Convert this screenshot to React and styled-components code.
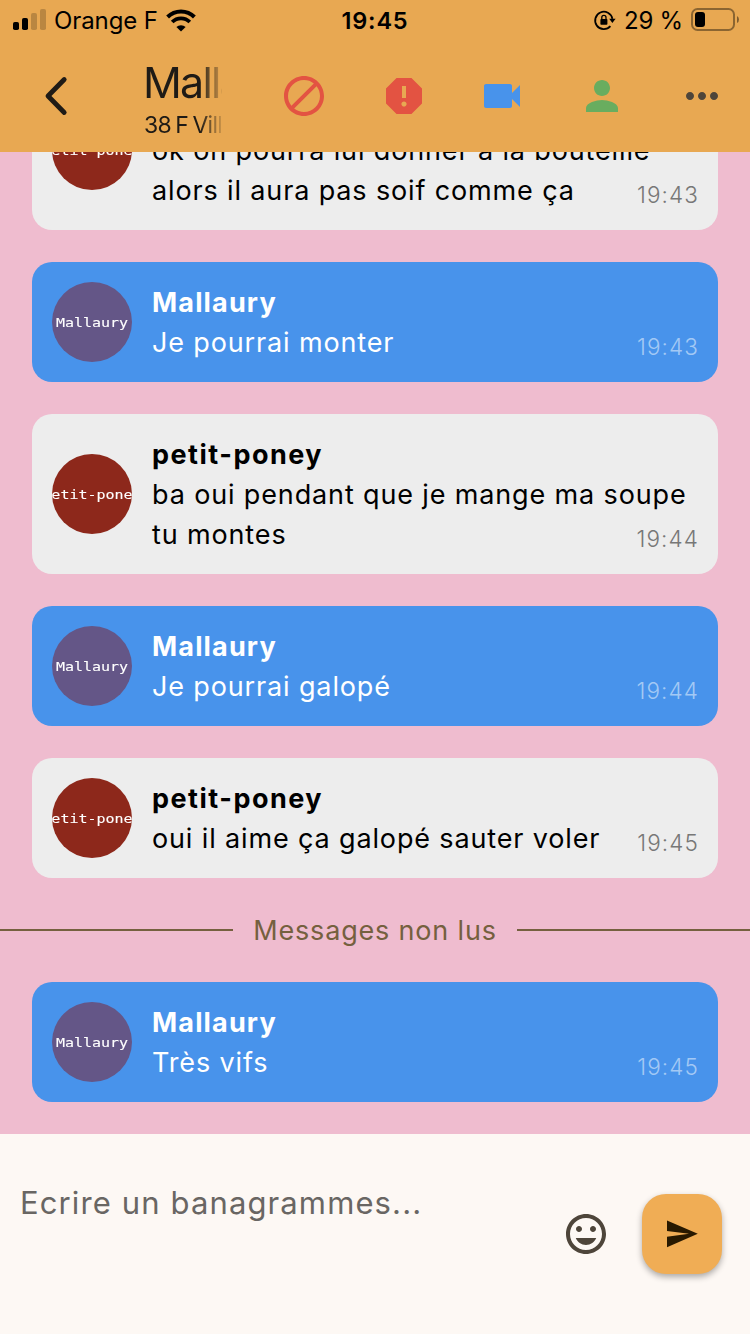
import React from "react";
import styled, { createGlobalStyle, css } from "styled-components";

const GlobalStyle = createGlobalStyle`
  * {
    box-sizing: border-box;
  }
  body {
    margin: 0;
    font-family: Inter, "Liberation Sans", sans-serif;
  }
`;

const changeTheme = (props) => {
  switch (props.$variant) {
    case "mine":
      return css`
        background: #4893eb;
        color: #ffffff;
      `;
    default:
      return css`
        background: #ededed;
        color: #000000;
      `;
  }
};

const Screen = styled.div`
  width: 750px;
  height: 1334px;
  display: flex;
  flex-direction: column;
  overflow: hidden;
  background: #efbccf;
`;
const Header = styled.header`
  height: 152px;
  flex: none;
  display: flex;
  flex-direction: column;
  background: #e8a852;
`;
const StatusBar = styled.div`
  height: 40px;
  display: grid;
  grid-template-columns: 1fr auto 1fr;
  align-items: center;
  padding: 0 11px 0 13px;
  color: #000000;
  font-size: 24px;
  line-height: 40px;
`;
const StatusLeft = styled.div`
  display: flex;
  align-items: center;
  gap: 8px;
`;
const StatusRight = styled(StatusLeft)`
  justify-content: flex-end;
`;
const Carrier = styled.span`
  padding-top: 2px;
  font-size: 24px;
  line-height: 38px;
  letter-spacing: -0.1px;
`;
const Clock = styled.span`
  padding: 2px 2px 0 0;
  font-size: 23.5px;
  line-height: 38px;
  font-weight: 600;
  letter-spacing: 0.8px;
`;
const Percent = styled.span`
  padding-top: 2px;
  font-size: 24px;
  line-height: 38px;
  letter-spacing: -0.2px;
`;
const Toolbar = styled.div`
  height: 112px;
  display: flex;
  align-items: center;
  padding: 0 24px 0 32px;
`;
const IconButton = styled.button`
  width: 48px;
  height: 48px;
  flex: none;
  padding: 0;
  border: none;
  background: none;
  color: ${(props) => props.$color || "#4e453a"};
  margin-left: ${(props) => props.$shift || "0"};
`;
const Contact = styled.div`
  width: 79px;
  height: 112px;
  margin-left: 63px;
  padding-top: 16px;
  overflow: hidden;
  white-space: nowrap;
  color: #1f1b16;
  mask-image: linear-gradient(to right, #000 72%, transparent 104%);
`;
const ContactName = styled.div`
  font-size: 43px;
  line-height: 52px;
  font-weight: 400;
  letter-spacing: -1.8px;
`;
const ContactInfo = styled.div`
  padding-left: 1px;
  font-size: 23px;
  line-height: 34px;
  font-weight: 400;
  letter-spacing: -0.7px;
  word-spacing: -1.5px;
`;
const Actions = styled.div`
  display: flex;
  gap: 52px;
  margin-left: auto;
`;
const Messages = styled.main`
  flex: 1;
  min-height: 0;
  display: flex;
  flex-direction: column;
  justify-content: flex-end;
  gap: 32px;
  padding-bottom: 32px;
  overflow: hidden;
`;
const Bubble = styled.article`
  position: relative;
  flex: none;
  display: flex;
  align-items: center;
  gap: 20px;
  margin: 0 32px;
  padding: 20px;
  border-radius: 20px;
  ${changeTheme}
`;
const Avatar = styled.div`
  width: 80px;
  height: 80px;
  flex: none;
  display: flex;
  align-items: center;
  justify-content: center;
  overflow: hidden;
  border-radius: 50%;
  white-space: nowrap;
  background: ${(props) => (props.$variant === "mine" ? "#645687" : "#8d281b")};
  color: #ffffff;
  font-family: "DejaVu Sans Mono", monospace;
  font-size: 15px;
`;
const AvatarLabel = styled.span`
  padding-top: 2px;
  transform: scaleY(0.86);
  -webkit-text-stroke: 0.15px #ffffff;
`;
const Content = styled.div`
  flex: 1;
  min-width: 0;
  padding-top: 1px;
  margin-bottom: -1px;
  font-size: 27px;
  line-height: 40px;
`;
const Author = styled.div`
  font-weight: 700;
  letter-spacing: ${(props) => (props.$variant === "mine" ? "1.15px" : "1.5px")};
`;
const Line = styled.div`
  font-weight: 400;
  letter-spacing: 0.86px;
  white-space: nowrap;
`;
const Time = styled.time`
  position: absolute;
  right: 19px;
  bottom: 19px;
  font-size: 22.5px;
  line-height: 32px;
  font-weight: 300;
  letter-spacing: 1.1px;
  color: ${(props) => (props.$variant === "mine" ? "#a3c9f5" : "#777777")};
`;
const Unread = styled.div`
  flex: none;
  height: 40px;
  display: flex;
  align-items: center;
  gap: 20px;
  color: #75603f;
  font-size: 27px;
  font-weight: 400;
  line-height: 38px;
  letter-spacing: 0.82px;

  &::before,
  &::after {
    content: "";
    flex: 1;
    height: 2px;
    background: #75603f;
  }
`;
const UnreadLabel = styled.span`
  padding-top: 2px;
`;
const Composer = styled.footer`
  height: 200px;
  flex: none;
  display: flex;
  align-items: flex-start;
  padding: 44px 28px 0 20px;
  background: #fdf8f4;
`;
const Placeholder = styled.div`
  flex: 1;
  color: #696663;
  font-size: 31px;
  line-height: 50px;
  letter-spacing: 1.12px;
`;
const EmojiButton = styled(IconButton)`
  margin: 32px 32px 0 0;
`;
const SendButton = styled.button`
  width: 80px;
  height: 80px;
  margin-top: 16px;
  padding: 0;
  border: none;
  border-radius: 24px;
  background: #f0ad55;
  color: #281900;
  box-shadow: 0 3px 6px rgba(0, 0, 0, 0.32);
`;
const Svg = styled.svg`
  display: block;
  flex: none;
  overflow: visible;
`;

const MaterialIcon = ({ d }) => (
  <Svg width="48" height="48" viewBox="0 0 24 24" fill="currentColor">
    <path d={d} />
  </Svg>
);

const icons = {
  block:
    "M12 2C6.5 2 2 6.5 2 12s4.5 10 10 10 10-4.5 10-10S17.5 2 12 2zM4 12c0-4.4 3.6-8 8-8 1.8 0 3.5.6 4.9 1.7L5.7 16.9C4.6 15.5 4 13.8 4 12zm8 8c-1.8 0-3.5-.6-4.9-1.7L18.3 7.1C19.4 8.5 20 10.2 20 12c0 4.4-3.6 8-8 8z",
  report:
    "M15.73 3H8.27L3 8.27v7.46L8.27 21h7.46L21 15.73V8.27L15.73 3zM12 17.3c-.72 0-1.3-.58-1.3-1.3s.58-1.3 1.3-1.3 1.3.58 1.3 1.3-.58 1.3-1.3 1.3zm1-4.3h-2V7h2v6z",
  video:
    "M17 10.5V7c0-.55-.45-1-1-1H4c-.55 0-1 .45-1 1v10c0 .55.45 1 1 1h12c.55 0 1-.45 1-1v-3.5l4 4v-11l-4 4z",
  person:
    "M12 12c2.21 0 4-1.79 4-4s-1.79-4-4-4-4 1.79-4 4 1.79 4 4 4zm0 2c-2.67 0-8 1.34-8 4v2h16v-2c0-2.66-5.33-4-8-4z",
  more: "M6 10c-1.1 0-2 .9-2 2s.9 2 2 2 2-.9 2-2-.9-2-2-2zm12 0c-1.1 0-2 .9-2 2s.9 2 2 2 2-.9 2-2-.9-2-2-2zm-6 0c-1.1 0-2 .9-2 2s.9 2 2 2 2-.9 2-2-.9-2-2-2z",
  emoji:
    "M11.99 2C6.47 2 2 6.48 2 12s4.47 10 9.99 10C17.52 22 22 17.52 22 12S17.52 2 11.99 2zM12 20c-4.42 0-8-3.58-8-8s3.58-8 8-8 8 3.58 8 8-3.58 8-8 8zm3.5-9c.83 0 1.5-.67 1.5-1.5S16.33 8 15.5 8 14 8.67 14 9.5s.67 1.5 1.5 1.5zm-7 0c.83 0 1.5-.67 1.5-1.5S9.33 8 8.5 8 7 8.67 7 9.5 7.67 11 8.5 11zm3.5 6.5c2.33 0 4.31-1.46 5.11-3.5H6.89c.8 2.04 2.78 3.5 5.11 3.5z",
};

const actions = [
  { name: "block", color: "#e35342" },
  { name: "report", color: "#e35342" },
  { name: "video", color: "#4893eb", shift: "-2px" },
  { name: "person", color: "#69ad5f" },
  { name: "more", color: "#4e453a" },
];

const SignalIcon = () => (
  <Svg width="33" height="22" viewBox="0 0 33 22">
    <rect x="0" y="13" width="6" height="8" rx="1.8" />
    <rect x="9" y="9" width="6" height="12" rx="1.8" />
    <rect x="18" y="4" width="6" height="17" rx="1.8" opacity="0.2" />
    <rect x="27" y="0" width="6" height="21" rx="1.8" opacity="0.2" />
  </Svg>
);

const WifiIcon = () => (
  <Svg width="30" height="22" viewBox="0 0 30 22" fill="none" stroke="#000">
    <path d="M1.6 8a19 19 0 0 1 26.8 0" strokeWidth="4" />
    <path d="M6.2 13a12.4 12.4 0 0 1 17.6 0" strokeWidth="3.8" />
    <path
      d="M15 22.6l-4.6-4.6a6.6 6.6 0 0 1 9.2 0z"
      fill="#000"
      stroke="none"
    />
  </Svg>
);

const RotationLockIcon = () => (
  <Svg width="22" height="20" viewBox="0 0 22 20" fill="none" stroke="#000">
    <path d="M18.4 8.8A8.7 8.7 0 1 0 16.4 16.2" strokeWidth="1.8" />
    <path d="M15.2 8.8h6.4L18.4 13z" fill="#000" stroke="none" />
    <rect
      x="6.4"
      y="9"
      width="7"
      height="5.8"
      rx="0.8"
      fill="#000"
      stroke="none"
    />
    <path d="M7.8 9.4V7.4a2.1 2.1 0 0 1 4.2 0v2" strokeWidth="1.3" />
  </Svg>
);

const BatteryIcon = () => (
  <Svg width="48" height="24" viewBox="0 0 48 24">
    <rect
      x="1"
      y="1"
      width="42"
      height="21"
      rx="5.5"
      fill="none"
      stroke="#000"
      strokeWidth="2"
      opacity="0.4"
    />
    <rect x="4" y="4" width="10" height="15" rx="3" />
    <path d="M46 8q2 1 2 3.5t-2 3.5z" opacity="0.45" />
  </Svg>
);

const BackIcon = () => (
  <Svg width="48" height="48" viewBox="0 0 48 48" fill="none">
    <path
      d="M32.2 7.5L16 24l16.2 16.5"
      stroke="#1f1b16"
      strokeWidth="4.8"
      strokeLinecap="round"
      strokeLinejoin="round"
    />
  </Svg>
);

const SendIcon = () => (
  <Svg width="80" height="80" viewBox="0 0 80 80" fill="currentColor">
    <path d="M25 26.5l30.8 13.3L25 53.2V42.8l22-3L25 37z" />
  </Svg>
);

const Message = ({ author, variant, lines, time }) => (
  <Bubble $variant={variant}>
    <Avatar $variant={variant}>
      <AvatarLabel>{author}</AvatarLabel>
    </Avatar>
    <Content>
      <Author $variant={variant}>{author}</Author>
      {lines.map((line) => (
        <Line key={line}>{line}</Line>
      ))}
    </Content>
    <Time $variant={variant}>{time}</Time>
  </Bubble>
);

const messages = [
  {
    author: "petit-poney",
    lines: [
      "ok on pourra lui donner à la bouteille",
      "alors il aura pas soif comme ça",
    ],
    time: "19:43",
  },
  {
    author: "Mallaury",
    variant: "mine",
    lines: ["Je pourrai monter"],
    time: "19:43",
  },
  {
    author: "petit-poney",
    lines: ["ba oui pendant que je mange ma soupe", "tu montes"],
    time: "19:44",
  },
  {
    author: "Mallaury",
    variant: "mine",
    lines: ["Je pourrai galopé"],
    time: "19:44",
  },
  {
    author: "petit-poney",
    lines: ["oui il aime ça galopé sauter voler"],
    time: "19:45",
  },
];

const App = () => (
  <>
    <GlobalStyle />
    <Screen>
      <Header>
        <StatusBar>
          <StatusLeft>
            <SignalIcon />
            <Carrier>Orange F</Carrier>
            <WifiIcon />
          </StatusLeft>
          <Clock>19:45</Clock>
          <StatusRight>
            <RotationLockIcon />
            <Percent>29 %</Percent>
            <BatteryIcon />
          </StatusRight>
        </StatusBar>
        <Toolbar>
          <IconButton>
            <BackIcon />
          </IconButton>
          <Contact>
            <ContactName>Mallaury</ContactName>
            <ContactInfo>38 F Ville</ContactInfo>
          </Contact>
          <Actions>
            {actions.map(({ name, color, shift }) => (
              <IconButton key={name} $color={color} $shift={shift}>
                <MaterialIcon d={icons[name]} />
              </IconButton>
            ))}
          </Actions>
        </Toolbar>
      </Header>
      <Messages>
        {messages.map((message, i) => (
          <Message key={i} {...message} />
        ))}
        <Unread>
          <UnreadLabel>Messages non lus</UnreadLabel>
        </Unread>
        <Message
          author="Mallaury"
          variant="mine"
          lines={["Très vifs"]}
          time="19:45"
        />
      </Messages>
      <Composer>
        <Placeholder>Ecrire un banagrammes...</Placeholder>
        <EmojiButton>
          <MaterialIcon d={icons.emoji} />
        </EmojiButton>
        <SendButton>
          <SendIcon />
        </SendButton>
      </Composer>
    </Screen>
  </>
);

export default App;
